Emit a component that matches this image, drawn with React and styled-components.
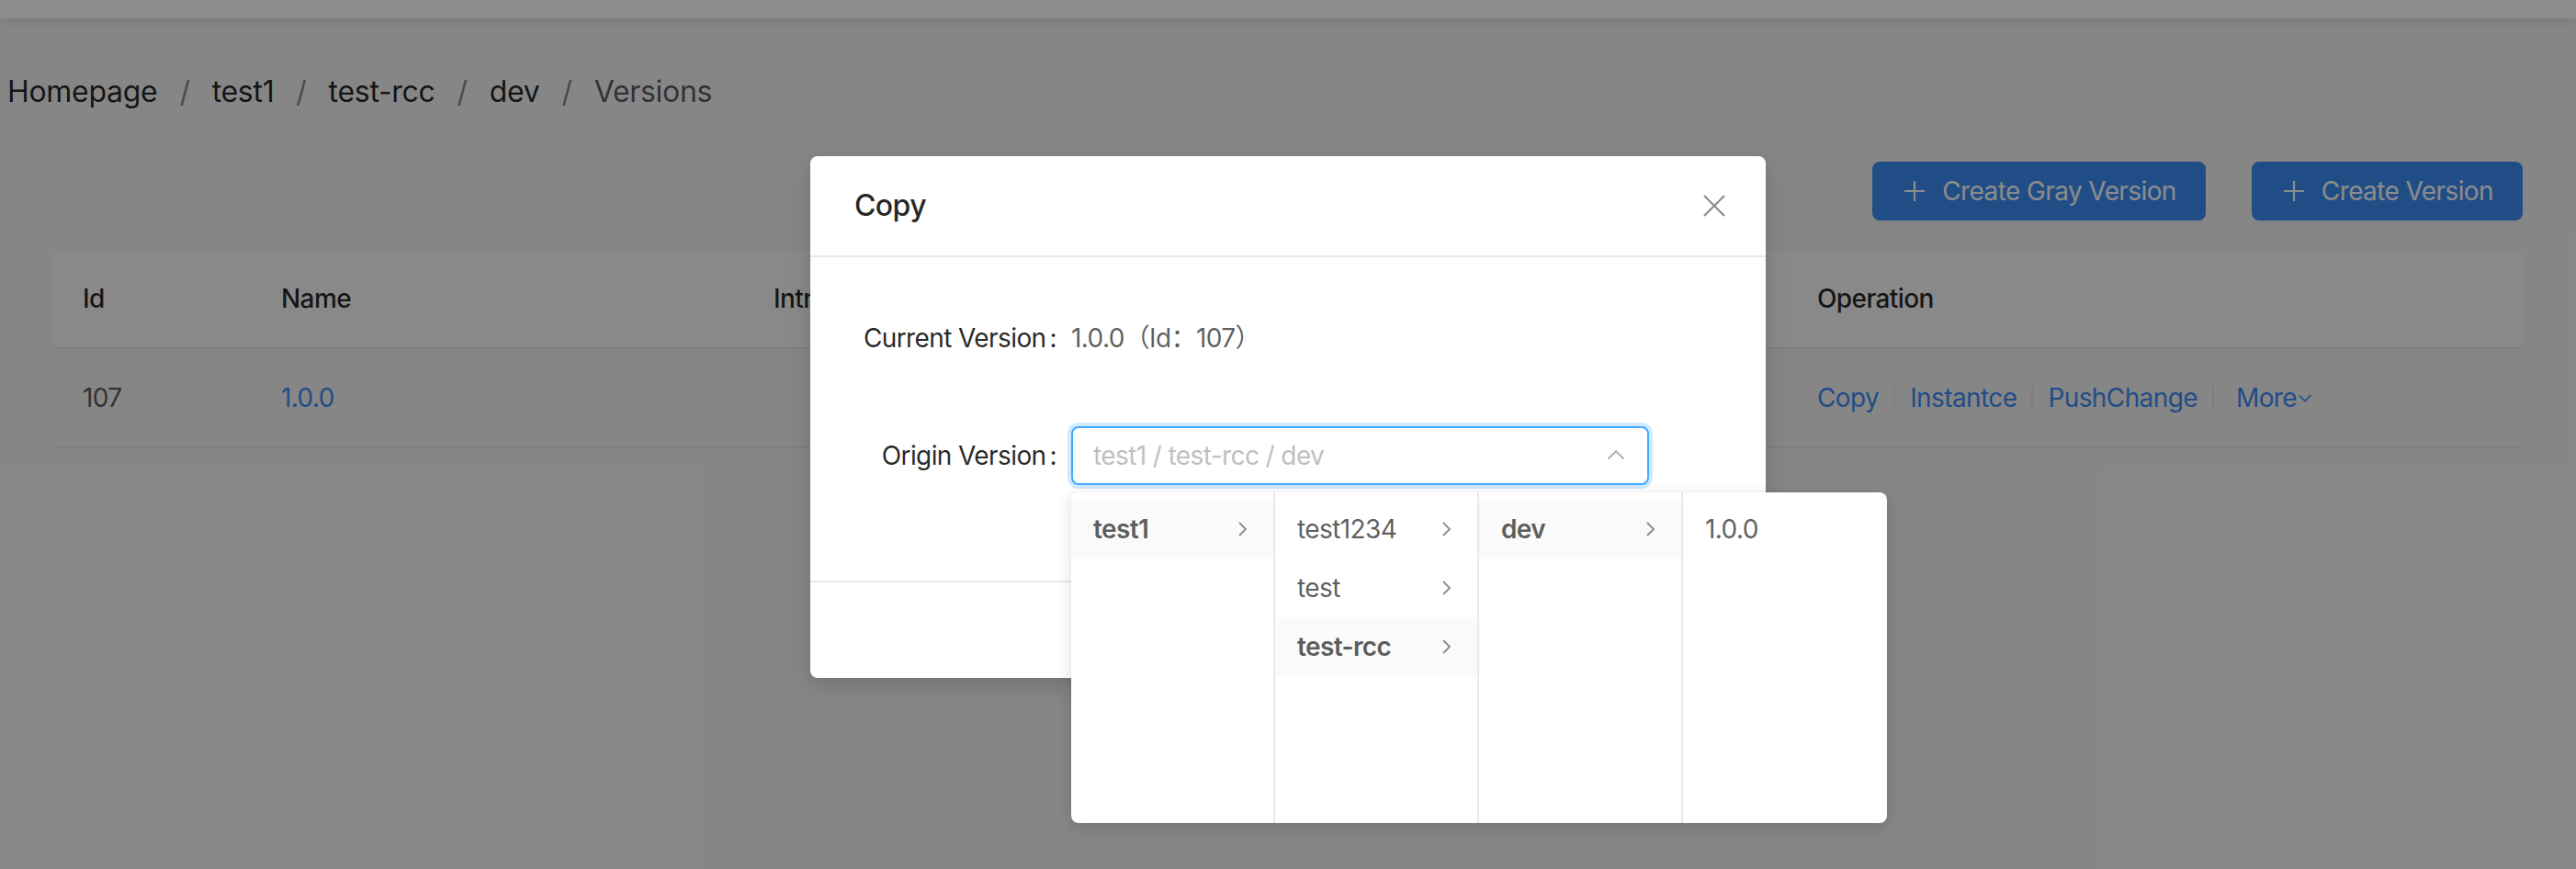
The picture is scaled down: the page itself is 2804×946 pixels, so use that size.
import React from 'react';
import styled, { createGlobalStyle } from 'styled-components';

const GlobalStyle = createGlobalStyle`
  *, *::before, *::after { box-sizing: border-box; }
  html, body { margin: 0; padding: 0; background: #fff; }
  body { font-family: Inter, "Noto Sans CJK SC", sans-serif; }
`;

const Page = styled.div`
  zoom: 2;
  position: relative;
  width: 1402px;
  height: 473px;
  overflow: hidden;
  background: #f5f5f5;
  color: rgba(0, 0, 0, 0.65);
  font-size: 14px;
  letter-spacing: -0.3px;
  font-family: Inter, "Noto Sans CJK SC", sans-serif;
`;

const TopBar = styled.div`
  height: 10px;
  background: #fff;
  box-shadow: 0 1px 6px rgba(0, 0, 0, 0.12);
`;

const Breadcrumb = styled.nav`
  display: flex;
  align-items: center;
  margin: 29px 0 0 4px;
  font-size: 16px;
  line-height: 22px;
  letter-spacing: -0.15px;
`;

const Crumb = styled.span`
  color: ${(p) => (p.$current ? 'rgba(0, 0, 0, 0.65)' : 'rgba(0, 0, 0, 0.85)')};
`;

const Sep = styled.span`
  margin: 0 12px;
  color: rgba(0, 0, 0, 0.45);
`;

const Main = styled.div`
  padding: 0 29px;
`;

const Toolbar = styled.div`
  display: flex;
  justify-content: flex-end;
  gap: 25px;
  margin-top: 27px;
`;

const Button = styled.button`
  display: inline-flex;
  align-items: center;
  gap: 8px;
  height: 32px;
  padding: 0 15px;
  border-radius: 4px;
  font-family: inherit;
  font-size: 14px;
  letter-spacing: inherit;
  border: 1px solid ${(p) => (p.$primary ? '#3c8df5' : '#d9d9d9')};
  background: ${(p) => (p.$primary ? '#3c8df5' : '#fff')};
  color: ${(p) => (p.$primary ? '#fff' : 'rgba(0, 0, 0, 0.65)')};
  box-shadow: 0 2px 0 rgba(0, 0, 0, 0.015);
  cursor: pointer;
`;

const Table = styled.div`
  margin-top: 16px;
`;

const Row = styled.div`
  display: grid;
  grid-template-columns: 108px 268px 1fr 400px;
  border-bottom: 1px solid #e8e8e8;
  background: ${(p) => (p.$head ? '#fafafa' : 'transparent')};
  border-radius: ${(p) => (p.$head ? '4px 4px 0 0' : '0')};
`;

const Cell = styled.div`
  padding: 16px;
  line-height: 21px;
  white-space: nowrap;
  color: ${(p) => (p.$head ? 'rgba(0, 0, 0, 0.85)' : 'rgba(0, 0, 0, 0.65)')};
  font-weight: ${(p) => (p.$head ? 500 : 400)};
  display: flex;
  align-items: center;
`;

const Link = styled.a`
  color: #3c8df5;
  text-decoration: none;
  display: inline-flex;
  align-items: center;
  margin-left: ${(p) => (p.$gap ? '4px' : '0')};
`;

const Divider = styled.span`
  display: inline-block;
  width: 1px;
  height: 0.9em;
  margin: 0 8px;
  background: #e8e8e8;
`;

const Mask = styled.div`
  position: absolute;
  inset: 0;
  background: rgba(0, 0, 0, 0.45);
`;

const Modal = styled.div`
  position: absolute;
  left: 441px;
  top: 85px;
  width: 520px;
  background: #fff;
  border-radius: 4px;
  box-shadow: 0 4px 12px rgba(0, 0, 0, 0.15);
`;

const ModalHeader = styled.div`
  display: flex;
  align-items: center;
  justify-content: space-between;
  padding: 16px 24px;
  border-bottom: 1px solid #e8e8e8;
`;

const Title = styled.div`
  font-size: 16px;
  line-height: 22px;
  font-weight: 500;
  color: rgba(0, 0, 0, 0.85);
`;

const Close = styled.button`
  width: 56px;
  height: 56px;
  margin: -17px -24px -17px 0;
  display: flex;
  align-items: center;
  justify-content: center;
  border: 0;
  background: transparent;
  color: rgba(0, 0, 0, 0.45);
  padding: 0;
`;

const ModalBody = styled.div`
  padding: 24px;
  font-size: 14px;
`;

const FormItem = styled.div`
  display: flex;
  margin-bottom: 24px;
  line-height: 40px;
`;

const Label = styled.label`
  width: 25%;
  text-align: right;
  color: rgba(0, 0, 0, 0.85);
  white-space: nowrap;

  &::after {
    content: ':';
    margin: 0 8px 0 2px;
  }
`;

const Control = styled.div`
  width: 66.6667%;
  display: flex;
  align-items: center;
  position: relative;
  color: rgba(0, 0, 0, 0.65);
`;

const Picker = styled.div`
  width: 100%;
  height: 32px;
  padding: 4px 11px;
  display: flex;
  align-items: center;
  justify-content: space-between;
  line-height: 22px;
  border: 1px solid #40a9ff;
  border-radius: 4px;
  box-shadow: 0 0 0 2px rgba(24, 144, 255, 0.2);
  background: #fff;
`;

const Placeholder = styled.span`
  color: #bfbfbf;
`;

const Menus = styled.div`
  position: absolute;
  top: 100%;
  left: 0;
  z-index: 10;
  display: flex;
  background: #fff;
  border-radius: 4px;
  box-shadow: 0 2px 8px rgba(0, 0, 0, 0.15);
  line-height: 22px;
`;

const Menu = styled.ul`
  width: 111px;
  height: 180px;
  margin: 0;
  padding: 4px 0;
  list-style: none;
  border-right: 1px solid #e8e8e8;

  &:last-child {
    border-right-color: transparent;
  }
`;

const MenuItem = styled.li`
  display: flex;
  align-items: center;
  justify-content: space-between;
  padding: 5px 12px;
  color: rgba(0, 0, 0, 0.65);
  white-space: nowrap;
  font-weight: ${(p) => (p.$active ? 600 : 400)};
  background: ${(p) => (p.$active ? '#fafafa' : 'transparent')};
`;

const ModalFooter = styled.div`
  display: flex;
  justify-content: flex-end;
  gap: 8px;
  padding: 10px 16px;
  border-top: 1px solid #e8e8e8;
`;

const PlusIcon = () => (
  <svg width="14" height="14" viewBox="0 0 14 14" fill="none" stroke="currentColor" strokeWidth="1.1">
    <path d="M7 1.5v11M1.5 7h11" />
  </svg>
);

const CloseIcon = () => (
  <svg width="13" height="13" viewBox="0 0 13 13" fill="none" stroke="currentColor" strokeWidth="1.1">
    <path d="M1 1l11 11M12 1L1 12" />
  </svg>
);

const Chevron = ({ dir = 'right', size = 10, color = 'rgba(0, 0, 0, 0.45)' }) => {
  const d = {
    right: 'M3.5 1.5L7 5l-3.5 3.5',
    down: 'M1.5 3.5L5 7l3.5-3.5',
    up: 'M1.5 6.5L5 3l3.5 3.5',
  }[dir];
  return (
    <svg width={size} height={size} viewBox="0 0 10 10" fill="none" stroke={color} strokeWidth="0.9">
      <path d={d} />
    </svg>
  );
};

const columns = [
  [{ label: 'test1', active: true, expand: true }],
  [
    { label: 'test1234', expand: true },
    { label: 'test', expand: true },
    { label: 'test-rcc', active: true, expand: true },
  ],
  [{ label: 'dev', active: true, expand: true }],
  [{ label: '1.0.0' }],
];

const crumbs = ['Homepage', 'test1', 'test-rcc', 'dev', 'Versions'];

export default function App() {
  return (
    <Page>
      <GlobalStyle />
      <TopBar />
      <Breadcrumb>
        {crumbs.map((c, i) => (
          <React.Fragment key={c}>
            {i > 0 && <Sep>/</Sep>}
            <Crumb $current={i === crumbs.length - 1}>{c}</Crumb>
          </React.Fragment>
        ))}
      </Breadcrumb>
      <Main>
        <Toolbar>
          <Button $primary>
            <PlusIcon />
            Create Gray Version
          </Button>
          <Button $primary>
            <PlusIcon />
            Create Version
          </Button>
        </Toolbar>
        <Table>
          <Row $head>
            <Cell $head>Id</Cell>
            <Cell $head>Name</Cell>
            <Cell $head>Introduction</Cell>
            <Cell $head>Operation</Cell>
          </Row>
          <Row>
            <Cell>107</Cell>
            <Cell>
              <Link>1.0.0</Link>
            </Cell>
            <Cell />
            <Cell>
              <Link>Copy</Link>
              <Divider />
              <Link>Instantce</Link>
              <Divider />
              <Link>PushChange</Link>
              <Divider />
              <Link $gap>
                More
                <Chevron dir="down" size={9} color="#3c8df5" />
              </Link>
            </Cell>
          </Row>
        </Table>
      </Main>

      <Mask />

      <Modal>
        <ModalHeader>
          <Title>Copy</Title>
          <Close>
            <CloseIcon />
          </Close>
        </ModalHeader>
        <ModalBody>
          <FormItem>
            <Label>Current Version</Label>
            <Control>1.0.0（Id：107）</Control>
          </FormItem>
          <FormItem>
            <Label>Origin Version</Label>
            <Control>
              <Picker>
                <Placeholder>test1 / test-rcc / dev</Placeholder>
                <Chevron dir="up" size={12} color="rgba(0, 0, 0, 0.3)" />
              </Picker>
              <Menus>
                {columns.map((col, ci) => (
                  <Menu key={ci}>
                    {col.map((item) => (
                      <MenuItem key={item.label} $active={item.active}>
                        {item.label}
                        {item.expand && <Chevron />}
                      </MenuItem>
                    ))}
                  </Menu>
                ))}
              </Menus>
            </Control>
          </FormItem>
        </ModalBody>
        <ModalFooter>
          <Button>Cancel</Button>
          <Button $primary>OK</Button>
        </ModalFooter>
      </Modal>
    </Page>
  );
}
